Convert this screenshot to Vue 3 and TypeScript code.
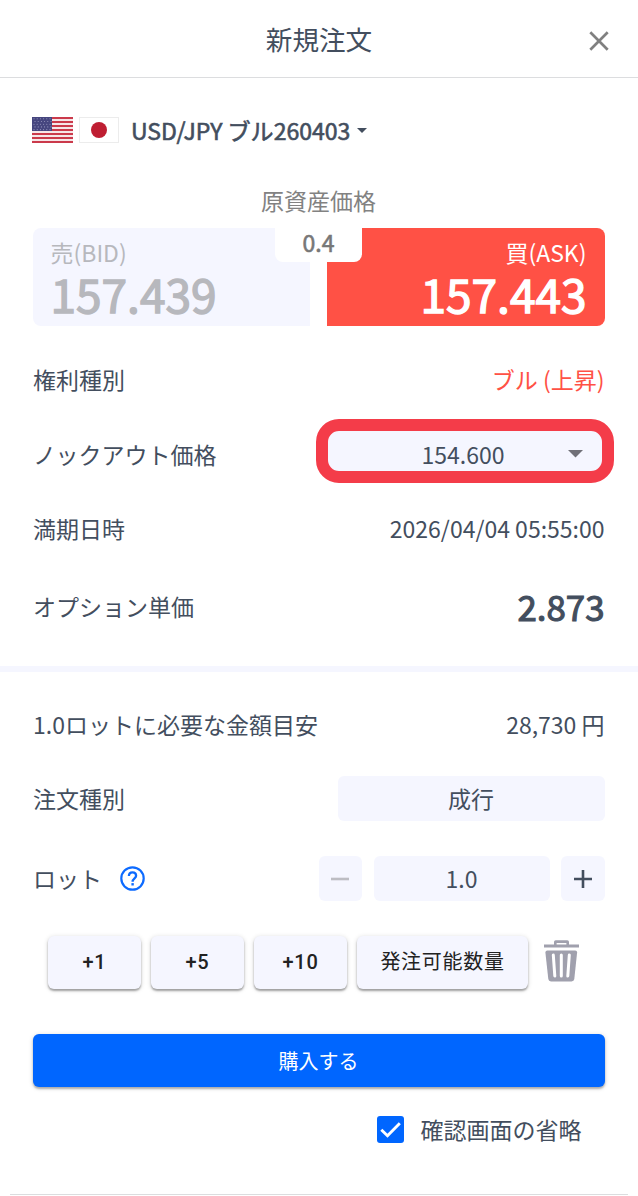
<script setup lang="ts">
import { ref } from 'vue'

const lots = ['+1', '+5', '+10']
const skipConfirm = ref(true)
const stripes = [0, 2, 4, 6, 8, 10, 12]
const stars: { x: number; y: number }[] = []
for (let r = 0; r < 5; r++) {
  for (let c = 0; c < 6; c++) {
    stars.push({ x: 2 + c * 3.2 + (r % 2) * 1, y: 1.8 + r * 2.7 })
  }
}
</script>

<template>
  <main class="order">
    <header class="head">
      <h1 class="title">新規注文</h1>
      <button class="close" aria-label="閉じる">
        <svg width="20" height="20" viewBox="0 0 20 20">
          <path d="M1.3 1.3 18.7 18.7M18.7 1.3 1.3 18.7" stroke="#808080" stroke-width="2.7" fill="none" />
        </svg>
      </button>
    </header>

    <div class="pair">
      <svg class="flag" width="41" height="26" viewBox="0 0 41 26">
        <rect width="41" height="26" fill="#f6e6e8" />
        <rect v-for="s in stripes" :key="s" x="0" :y="s * 2" width="41" height="2" fill="#cb3a4b" />
        <rect width="20" height="14" fill="#46467f" />
        <circle v-for="(p, i) in stars" :key="'s' + i" :cx="p.x" :cy="p.y" r=".55" fill="#9c9cc2" />
      </svg>
      <svg class="flag" width="40" height="26" viewBox="0 0 40 26">
        <rect x=".5" y=".5" width="39" height="25" fill="#fff" stroke="#ececec" />
        <circle cx="20" cy="13" r="8" fill="#bf1e32" />
      </svg>
      <span class="name">USD/JPY ブル260403</span>
      <svg class="caret" width="10" height="5" viewBox="0 0 10 5"><path d="M0 0H10L5 5Z" fill="#434e5e" /></svg>
    </div>

    <p class="caption">原資産価格</p>
    <div class="prices">
      <div class="price bid">
        <span class="side">売(BID)</span>
        <span class="rate">157.439</span>
      </div>
      <div class="price ask">
        <span class="side">買(ASK)</span>
        <span class="rate">157.443</span>
      </div>
      <div class="spread">0.4</div>
    </div>

    <section class="details">
      <div class="row"><span>権利種別</span><span class="bull">ブル (上昇)</span></div>
      <div class="row">
        <span>ノックアウト価格</span>
        <div class="select">
          <span>154.600</span>
          <svg class="arrow" width="15" height="8" viewBox="0 0 15 8"><path d="M0 0H15L7.5 7.6Z" fill="#707078" /></svg>
        </div>
      </div>
      <div class="row"><span>満期日時</span><span>2026/04/04 05:55:00</span></div>
      <div class="row unit"><span>オプション単価</span><span class="premium">2.873</span></div>
    </section>

    <section class="form">
      <div class="row"><span>1.0ロットに必要な金額目安</span><span>28,730 円</span></div>
      <div class="row"><span>注文種別</span><div class="field type">成行</div></div>
      <div class="row lot">
        <span class="lotlabel">ロット
          <svg width="25" height="25" viewBox="0 0 25 25">
            <circle cx="12.5" cy="12.5" r="11.2" fill="none" stroke="#0d6bff" stroke-width="2.2" />
            <path d="M8.9 10.1C8.9 7.6 10.4 6.3 12.5 6.3S16.1 7.8 16.1 9.8C16.1 12.3 12.6 12.4 12.6 15.7" fill="none" stroke="#0d6bff" stroke-width="2.3" />
            <rect x="11.4" y="17.1" width="2.4" height="2.4" fill="#0d6bff" />
          </svg>
        </span>
        <div class="stepper">
          <button class="field step" aria-label="減らす">
            <svg width="18" height="18" viewBox="0 0 18 18"><path d="M0 9H18" stroke="#bdbdc3" stroke-width="2.6" /></svg>
          </button>
          <div class="field qty">1.0</div>
          <button class="field step" aria-label="増やす">
            <svg width="18" height="18" viewBox="0 0 18 18"><path d="M0 9H18M9 0V18" stroke="#434e5e" stroke-width="2.6" /></svg>
          </button>
        </div>
      </div>
    </section>

    <div class="quick">
      <button v-for="l in lots" :key="l" class="chip">{{ l }}</button>
      <button class="chip wide">発注可能数量</button>
      <svg class="trash" width="35" height="42" viewBox="0 0 35 42">
        <path d="M0 4.6H10V2Q10 .3 11.7 .3H23.3Q25 .3 25 2V4.6H35V7.4H0ZM12.6 3V4.6H22.4V3Z" fill="#a0a0ad" fill-rule="evenodd" />
        <path d="M1.4 12.5Q1.4 10.5 3.4 10.5H31.2Q33.2 10.5 33.1 12.5L30.3 39Q30 41.4 27.6 41.4H7Q4.6 41.4 4.3 39Z" fill="#a0a0ad" />
        <path d="M9.3 15 10.8 36M17.3 15V36M25.3 15 23.8 36" stroke="#fff" stroke-width="3" stroke-linecap="round" />
      </svg>
    </div>

    <button class="buy">購入する</button>

    <label class="confirm" @click="skipConfirm = !skipConfirm">
      <svg width="27" height="27" viewBox="0 0 27 27">
        <rect width="27" height="27" rx="3" :fill="skipConfirm ? '#0066ff' : '#a0a0ad'" />
        <path v-if="skipConfirm" d="M4.3 13.7 10.5 19.7 22.8 7.2" fill="none" stroke="#fff" stroke-width="2.9" />
      </svg>
      <span>確認画面の省略</span>
    </label>
    <div class="rule"></div>
  </main>
</template>

<style>
body {
  background: #fff;
}
</style>

<style scoped>
.order {
  width: 638px;
  height: 1196px;
  overflow: hidden;
  box-sizing: border-box;
  display: flex;
  flex-direction: column;
  background: #fff;
  color: #434e5e;
  font: 400 23px/34px "Noto Sans CJK JP", sans-serif;
}
button {
  border: 0;
  padding: 0;
  font: inherit;
  color: inherit;
}
.head {
  flex: none;
  height: 78px;
  box-sizing: border-box;
  border-bottom: 1px solid #dcdddf;
  display: grid;
  grid-template-columns: 1fr auto 1fr;
  align-items: center;
}
.title {
  grid-column: 2;
  margin: 0;
  font-size: 26.6px;
  font-weight: 400;
  line-height: 40px;
}
.close {
  justify-self: end;
  margin: 4px 29px 0 0;
  height: 20px;
  background: none;
}
.close svg,
.stepper svg {
  display: block;
}
.pair {
  height: 34px;
  margin: 35px 33px 0 32px;
  display: flex;
  align-items: center;
}
.flag + .flag {
  margin-left: 6px;
}
.name {
  margin-left: 12px;
  font-size: 23.05px;
  -webkit-text-stroke: 0.6px currentColor;
}
.caret {
  margin-left: 7px;
}
.caption {
  margin: 36px 1px 0 0;
  text-align: center;
  color: #828282;
}
.prices {
  position: relative;
  margin: 11px 33.5px 0 32.5px;
  height: 98px;
  display: grid;
  grid-template-columns: 1fr 1fr;
  gap: 17px;
}
.price {
  box-sizing: border-box;
  height: 98px;
  padding: 7px 18px 0;
  display: flex;
  flex-direction: column;
}
.bid {
  background: #f5f6ff;
  color: #b7b8bd;
  border-radius: 8px 0 0 8px;
}
.ask {
  background: #ff5145;
  color: #fff;
  border-radius: 0 8px 8px 0;
  align-items: flex-end;
}
.rate {
  font-size: 46px;
  line-height: 48px;
  -webkit-text-stroke: 1.4px currentColor;
}
.spread {
  position: absolute;
  left: 242.5px;
  top: 0;
  width: 87px;
  height: 34px;
  line-height: 29px;
  background: #fff;
  border-radius: 0 0 8px 8px;
  text-align: center;
  color: #777;
  -webkit-text-stroke: 0.6px currentColor;
}
.details {
  padding: 17px 33.5px 18.5px 33px;
  border-bottom: 6px solid #f5f6ff;
}
.row {
  height: 74.5px;
  display: flex;
  align-items: center;
  justify-content: space-between;
}
.row > span {
  margin-top: -2px;
}
.bull {
  color: #ff5145;
}
.select {
  box-sizing: border-box;
  width: 298px;
  height: 64px;
  margin: -7.5px -9px 0 0;
  padding: 5px 18.5px 0 94px;
  border: 12px solid #f43c49;
  border-radius: 23px;
  background: #f5f6ff;
  display: flex;
  align-items: center;
  justify-content: space-between;
}
.unit {
  height: 81px;
}
.premium {
  font-size: 34.8px;
  -webkit-text-stroke: 1.1px currentColor;
}
.form {
  padding: 15.5px 33.5px 0 33px;
}
.lot {
  height: 84px;
}
.field {
  height: 45px;
  line-height: 44px;
  background: #f5f6ff;
  border-radius: 6px;
  text-align: center;
}
.type {
  width: 267px;
  margin-top: -1.5px;
}
.row > .lotlabel {
  margin-top: -1px;
  display: flex;
  align-items: center;
  gap: 18px;
}
.stepper {
  display: flex;
  gap: 11.5px;
}
.step {
  width: 43.5px;
  display: grid;
  place-items: center;
}
.qty {
  width: 176px;
}
.quick {
  margin: 15px 0 0 48px;
  display: flex;
  align-items: center;
  gap: 10px;
}
.chip {
  width: 93px;
  height: 53px;
  border-radius: 6px;
  background: #f5f6ff;
  color: #222;
  font: 500 20px/53px Roboto, "Noto Sans CJK JP", sans-serif;
  letter-spacing: 0.7px;
  box-shadow: 0 2px 2px rgba(0, 0, 0, 0.3), 0 1px 5px rgba(0, 0, 0, 0.16);
}
.wide {
  width: 171px;
  font-weight: 400;
}
.trash {
  margin: -2px 0 0 6px;
}
.buy {
  flex: none;
  margin: 45.5px 33.5px 0 32.5px;
  height: 53px;
  border-radius: 6px;
  background: #0066ff;
  color: #fff;
  font-size: 20px;
  box-shadow: 0 2px 2px rgba(0, 0, 0, 0.25), 0 1px 5px rgba(0, 0, 0, 0.16);
}
.confirm {
  height: 34px;
  margin: 25px 56.5px 0 0;
  display: flex;
  align-items: center;
  justify-content: flex-end;
  gap: 17px;
}
.rule {
  margin: 48px 10px 0;
  height: 1px;
  background: #dcdddf;
}
</style>
